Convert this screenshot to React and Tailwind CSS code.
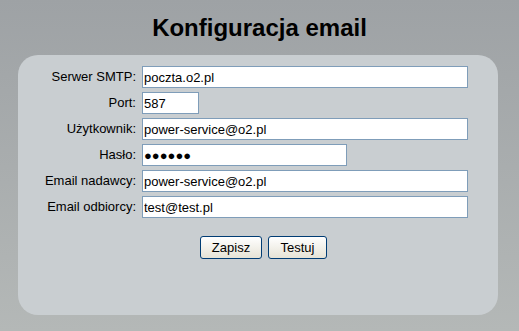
const rows = [
  { label: 'Serwer SMTP:', value: 'poczta.o2.pl', width: 'w-[326px]' },
  { label: 'Port:', value: '587', width: 'w-[57px]' },
  { label: 'Użytkownik:', value: 'power-service@o2.pl', width: 'w-[326px]' },
  { label: 'Hasło:', value: '●●●●●●', width: 'w-[205px]' },
  { label: 'Email nadawcy:', value: 'power-service@o2.pl', width: 'w-[326px]' },
  { label: 'Email odbiorcy:', value: 'test@test.pl', width: 'w-[326px]' },
]

const App = () => {
  return (
    <div className="w-[519px] h-[331px] bg-gradient-to-b from-[#9ea2a5] to-[#b4b8b7] font-['Liberation_Sans',Arial,sans-serif] text-black overflow-hidden">
      <h1 className="h-[55px] pt-[14px] text-center text-[24px] leading-[28px] font-bold">
        Konfiguracja email
      </h1>
      <div className="ml-[18px] w-[480px] h-[260px] bg-[#c9ced1] rounded-[20px] pt-[11px]">
        <div className="flex flex-col gap-[4px]">
          {rows.map((row) => (
            <div key={row.label} className="flex items-center h-[22px]">
              <label className="w-[119px] pr-[1px] text-right text-[13px]">{row.label}</label>
              <input
                type="text"
                readOnly
                value={row.value}
                className={`${row.width} ml-[5px] h-[22px] px-[1px] bg-white border border-[#7f9db9] text-[13px] outline-none`}
              />
            </div>
          ))}
        </div>
        <div className="flex gap-[6px] mt-[18px] ml-[182px]">
          <button className="w-[62px] h-[23px] rounded-[3px] border border-[#003c74] bg-gradient-to-b from-white to-[#e6e3d6] text-[13px]">
            Zapisz
          </button>
          <button className="w-[59px] h-[23px] rounded-[3px] border border-[#003c74] bg-gradient-to-b from-white to-[#e6e3d6] text-[13px]">
            Testuj
          </button>
        </div>
      </div>
    </div>
  )
}

export default App
